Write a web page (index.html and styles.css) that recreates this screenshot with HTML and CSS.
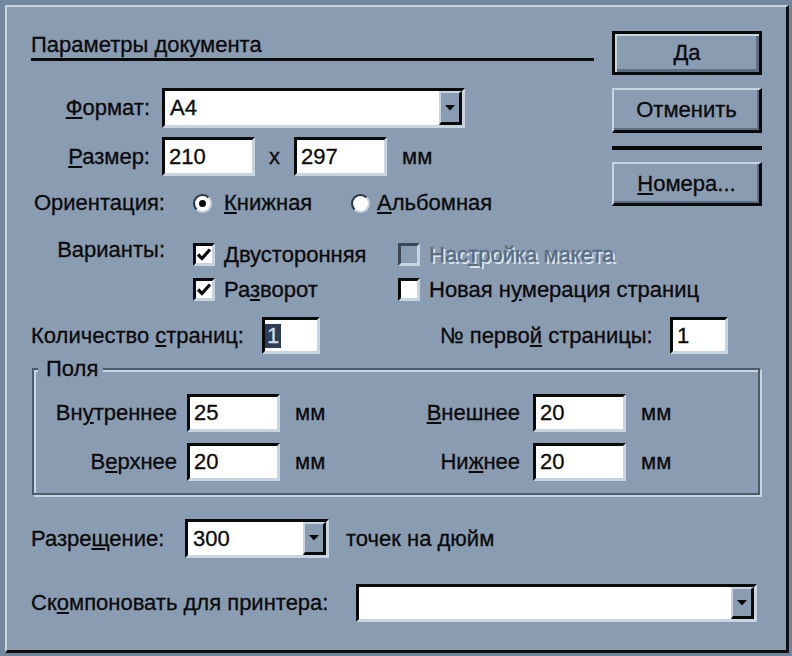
FILE: index.html
```html
<!DOCTYPE html>
<html lang="ru">
<head>
<meta charset="utf-8">
<title>Параметры документа</title>
<link rel="stylesheet" href="styles.css">
</head>
<body>
<div class="dialog">
  <div class="top">
    <div class="left">
      <div class="title">Параметры документа</div>
      <div class="row r-format">
        <span class="lab lab-a"><u>Ф</u>ормат:</span>
        <div class="combo combo-format">
          <span class="combo-text">A4</span>
          <span class="drop"><svg width="10" height="6" viewBox="0 0 10 6"><polygon points="0,0 10,0 5,5.5" fill="#0a0a0a"/></svg></span>
        </div>
      </div>
      <div class="row r-size">
        <span class="lab lab-a"><u>Р</u>азмер:</span>
        <div class="field w93">210</div>
        <span class="times">x</span>
        <div class="field w93">297</div>
        <span class="unit">мм</span>
      </div>
      <div class="row r-orient">
        <span class="lab lab-b">Ориентация:</span>
        <span class="radio on"></span>
        <span class="opt opt-first"><u>К</u>нижная</span>
        <span class="radio"></span>
        <span class="opt opt-second"><u>А</u>льбомная</span>
      </div>
    </div>
    <div class="buttons">
      <div class="btn default">Да</div>
      <div class="btn b-cancel">Отменить</div>
      <div class="sep"></div>
      <div class="btn b-num"><u>Н</u>омера...</div>
    </div>
  </div>

  <div class="variants">
    <span class="lab lab-b lab-var">Варианты:</span>
    <div class="checks">
      <div class="chk-item"><span class="chk"><svg width="16" height="16" viewBox="0 0 16 16"><path d="M2 7.5 L6 11.5 L14 2.5" fill="none" stroke="#0a0a0a" stroke-width="3.2"/></svg></span><span class="opt"><u>Д</u>вусторонняя</span></div>
      <div class="chk-item"><span class="chk disabled"></span><span class="opt dis">Нас<u>т</u>ройка макета</span></div>
      <div class="chk-item"><span class="chk"><svg width="16" height="16" viewBox="0 0 16 16"><path d="M2 7.5 L6 11.5 L14 2.5" fill="none" stroke="#0a0a0a" stroke-width="3.2"/></svg></span><span class="opt">Ра<u>з</u>ворот</span></div>
      <div class="chk-item"><span class="chk"></span><span class="opt">Новая н<u>у</u>мерация страниц</span></div>
    </div>
  </div>

  <div class="row r-count">
    <span class="lab lab-c1">Количество <u>с</u>траниц:</span>
    <div class="field w58 nopad"><span class="sel">1</span></div>
    <span class="lab lab-c2">№ перво<u>й</u> страницы:</span>
    <div class="field w58">1</div>
  </div>

  <fieldset class="group">
    <legend class="legend">Поля</legend>
    <div class="row mrow">
      <span class="lab mlab1">Вн<u>у</u>треннее</span>
      <div class="field w93">25</div>
      <span class="munit">мм</span>
      <span class="lab mlab2"><u>В</u>нешнее</span>
      <div class="field w93">20</div>
      <span class="unit">мм</span>
    </div>
    <div class="row mrow">
      <span class="lab mlab1">В<u>е</u>рхнее</span>
      <div class="field w93">20</div>
      <span class="munit">мм</span>
      <span class="lab mlab2">Ни<u>ж</u>нее</span>
      <div class="field w93">20</div>
      <span class="unit">мм</span>
    </div>
  </fieldset>

  <div class="row r-res">
    <span class="lab lab-res">Разре<u>щ</u>ение:</span>
    <div class="combo combo-res">
      <span class="combo-text">300</span>
      <span class="drop"><svg width="10" height="6" viewBox="0 0 10 6"><polygon points="0,0 10,0 5,5.5" fill="#0a0a0a"/></svg></span>
    </div>
    <span class="unit u-res">точек на дюйм</span>
  </div>

  <div class="row r-print">
    <span class="lab lab-print">Ск<u>о</u>мпоновать для принтера:</span>
    <div class="combo combo-print">
      <span class="combo-text"></span>
      <span class="drop"><svg width="10" height="6" viewBox="0 0 10 6"><polygon points="0,0 10,0 5,5.5" fill="#0a0a0a"/></svg></span>
    </div>
  </div>
</div>
</body>
</html>
```

FILE: styles.css
```css
html, body {
  margin: 0;
  padding: 0;
}
body {
  background: #72869d;
  font-family: "Liberation Sans", Arial, sans-serif;
  font-size: 22px;
  line-height: 24px;
  color: #0a0a0a;
  -webkit-text-stroke: 0.3px #0a0a0a;
  width: 792px;
  height: 656px;
  overflow: hidden;
}
u {
  text-decoration-thickness: 2px;
  text-underline-offset: 2px;
}
.dialog {
  box-sizing: border-box;
  width: 784px;
  height: 648px;
  margin: 5px 3px 3px 5px;
  background: #8a9cb2;
  border-top: 2px solid #c8d4e0;
  border-left: 2px solid #c8d4e0;
  border-right: 3px solid #111;
  border-bottom: 3px solid #111;
  padding: 24px 0 0 24px;
}
.top {
  display: flex;
  align-items: flex-start;
}
.left {
  width: 563px;
}
.title {
  margin-top: 2px;
  padding-bottom: 1px;
  border-bottom: 3px solid #0a0a0a;
  white-space: nowrap;
}
.row {
  display: flex;
  align-items: center;
}
.lab {
  white-space: nowrap;
  flex: none;
}
.lab-a {
  width: 119px;
  text-align: right;
  margin-right: 12px;
}
.lab-b {
  width: 134px;
  text-align: right;
  margin-right: 28px;
}
.r-format {
  margin-top: 27px;
  height: 40px;
}
.r-size {
  margin-top: 9px;
  height: 39px;
}
.r-orient {
  margin-top: 15px;
  height: 24px;
}

/* sunken controls */
.field,
.combo {
  box-sizing: border-box;
  height: 100%;
  background: #fff;
  border: 3px solid;
  border-color: #0a0a0a #c8d4e0 #c8d4e0 #0a0a0a;
  flex: none;
}
.field {
  display: flex;
  align-items: center;
  padding-left: 4px;
}
.field.nopad {
  padding-left: 0;
}
.w93 { width: 93px; }
.w58 { width: 58px; }
.combo {
  display: flex;
}
.combo-text {
  flex: 1;
  align-self: center;
  padding-left: 5px;
}
.drop {
  box-sizing: border-box;
  width: 23px;
  background: #8a9cb2;
  border-top: 2px solid #c8d4e0;
  border-left: 2px solid #c8d4e0;
  border-right: 3px solid #0a0a0a;
  border-bottom: 3px solid #0a0a0a;
  display: flex;
  align-items: center;
  justify-content: center;
}
.combo-format { width: 303px; }
.times {
  width: 39px;
  text-align: center;
}
.unit {
  margin-left: 15px;
  white-space: nowrap;
}

/* radio */
.radio {
  box-sizing: border-box;
  width: 19px;
  height: 19px;
  border-radius: 50%;
  background: #fff;
  border: 2px solid;
  border-color: #2a3544 #c8d4e0 #c8d4e0 #2a3544;
  flex: none;
  display: flex;
  align-items: center;
  justify-content: center;
}
.radio.on::after {
  content: "";
  width: 7px;
  height: 7px;
  border-radius: 50%;
  background: #0a0a0a;
}
.opt {
  white-space: nowrap;
}
.opt-first {
  width: 127px;
  margin-left: 12px;
}
.opt-second {
  margin-left: 7px;
}

/* buttons */
.buttons {
  margin-left: 18px;
  width: 150px;
  display: flex;
  flex-direction: column;
}
.btn {
  box-sizing: border-box;
  height: 45px;
  display: flex;
  align-items: center;
  justify-content: center;
  background: #8a9cb2;
  border-top: 2px solid #c8d4e0;
  border-left: 2px solid #c8d4e0;
  border-right: 3px solid #0a0a0a;
  border-bottom: 3px solid #0a0a0a;
  box-shadow: inset -2px -2px 0 #5d6e84;
  white-space: nowrap;
}
.btn.default {
  height: 44px;
  border: 3px solid #0a0a0a;
  box-shadow: inset 2px 2px 0 #c8d4e0, inset -3px -3px 0 #5d6e84;
}
.b-cancel { margin-top: 13px; }
.sep {
  margin-top: 13px;
  height: 4px;
  background: #0a0a0a;
}
.b-num {
  margin-top: 12px;
  height: 44px;
}

/* variants */
.variants {
  display: flex;
  align-items: flex-start;
  margin-top: 28px;
}
.lab-var {
  margin-top: -5px;
}
.checks {
  display: grid;
  grid-template-columns: 205px auto;
  row-gap: 12px;
}
.chk-item {
  display: flex;
  align-items: center;
  height: 23px;
}
.chk {
  box-sizing: border-box;
  width: 22px;
  height: 23px;
  background: #fff;
  border: 3px solid;
  border-color: #0a0a0a #c8d4e0 #c8d4e0 #0a0a0a;
  display: flex;
  align-items: center;
  justify-content: center;
  margin-right: 9px;
  flex: none;
}
.chk.disabled {
  background: #8a9cb2;
  border-color: #3a4656 #c8d4e0 #c8d4e0 #3a4656;
}
.dis {
  color: #5a6c82;
  -webkit-text-stroke: 0.3px #5a6c82;
  text-shadow: 2px 2px 0 #dfe7ef;
}

/* count row */
.r-count {
  margin-top: 16px;
  height: 37px;
}
.lab-c1 {
  width: 231px;
}
.lab-c2 {
  width: 230px;
  margin-left: 120px;
}
.sel {
  background: #2e3c55;
  color: #d2dce8;
  -webkit-text-stroke: 0.3px #d2dce8;
  padding: 0 2px;
}

/* group */
.group {
  box-sizing: border-box;
  width: 728px;
  margin: 3px 0 0 1px;
  padding: 13px 0 12px 0;
  min-inline-size: 0;
  border: 2px solid #4c5c70;
  box-shadow: inset 2px 2px 0 #c8d4e0, 2px 2px 0 #c8d4e0;
}
.legend {
  padding: 0 5px 0 8px;
  margin-left: 4px;
  background: #8a9cb2;
  line-height: 24px;
}
.mrow {
  height: 38px;
}
.mrow + .mrow {
  margin-top: 11px;
}
.mlab1 {
  width: 143px;
  text-align: right;
  margin-right: 10px;
}
.munit {
  box-sizing: border-box;
  width: 120px;
  padding-left: 15px;
  flex: none;
}
.mlab2 {
  width: 120px;
  text-align: right;
  margin-right: 13px;
}

/* resolution */
.r-res {
  margin-top: 24px;
  height: 39px;
}
.lab-res {
  width: 154px;
}
.combo-res { width: 144px; }
.u-res { margin-left: 17px; }

/* printer */
.r-print {
  margin-top: 26px;
  height: 38px;
}
.lab-print {
  width: 325px;
}
.combo-print { width: 401px; }
```
